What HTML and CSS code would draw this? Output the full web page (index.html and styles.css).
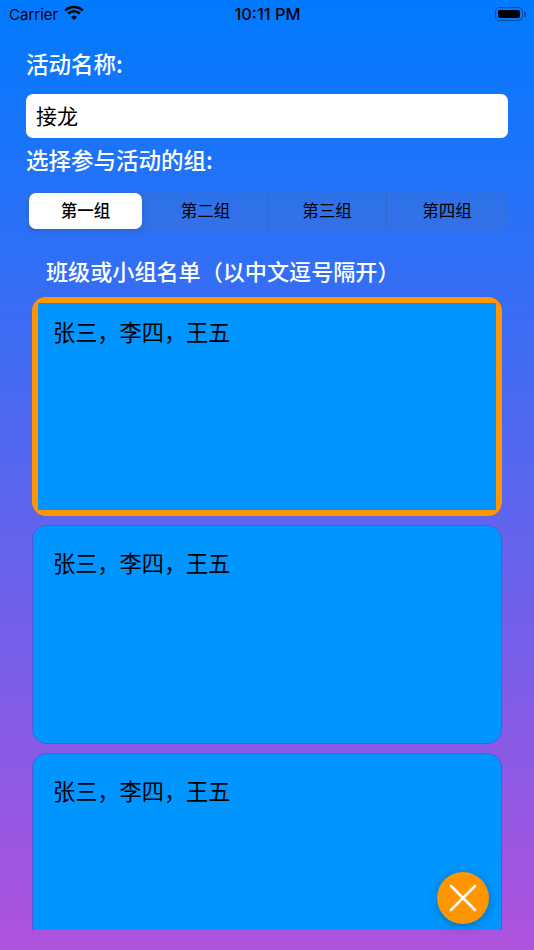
FILE: index.html
```html
<!DOCTYPE html>
<html lang="zh">
<head>
<meta charset="utf-8">
<title>活动</title>
<link rel="stylesheet" href="styles.css">
</head>
<body>
<div class="screen">
  <header class="status">
    <div class="status-left">
      <span>Carrier</span>
      <svg class="wifi" viewBox="0 0 20 15" width="20" height="15"><path d="M10 10.6l3 1.4-3 3-3-3z" fill="#000"/><path d="M1.2 5.6a12.6 12.6 0 0 1 17.6 0M4.2 8.5a8.4 8.4 0 0 1 11.6 0" fill="none" stroke="#000" stroke-width="2.5"/></svg>
    </div>
    <div class="status-time">10:11 PM</div>
    <div class="status-right">
      <div class="battery"><div class="battery-fill"></div></div>
      <div class="battery-cap"></div>
    </div>
  </header>
  <main class="form">
    <h2 class="label label-name">活动名称:</h2>
    <div class="input">接龙</div>
    <h2 class="label label-group">选择参与活动的组:</h2>
    <div class="segments">
      <div class="segment selected">第一组</div>
      <div class="segment second">第二组</div>
      <div class="segment divided">第三组</div>
      <div class="segment divided last">第四组</div>
    </div>
    <h2 class="label label-list">班级或小组名单（以中文逗号隔开）</h2>
    <div class="cards">
      <div class="card active"><div class="card-fill">张三，李四，王五</div></div>
      <div class="card">张三，李四，王五</div>
      <div class="card">张三，李四，王五</div>
    </div>
  </main>
  <button class="fab" aria-label="关闭">
    <svg viewBox="0 0 28 28" width="28" height="28"><path d="M2 2l24 24M26 2L2 26" stroke="#fff" stroke-width="2.6" stroke-linecap="round" fill="none"/></svg>
  </button>
</div>
</body>
</html>
```
FILE: styles.css
```css
* { box-sizing: border-box; margin: 0; padding: 0; }
html, body { width: 534px; height: 950px; overflow: hidden; }
body { font-family: "Noto Sans CJK SC", "Noto Sans", sans-serif; }
.screen {
  position: relative;
  width: 534px;
  height: 950px;
  overflow: hidden;
  background: linear-gradient(180deg, #007aff 0%, #af52de 100%);
}
.status {
  display: grid;
  grid-template-columns: 1fr auto 1fr;
  align-items: center;
  height: 28px;
  padding: 0 8px 0 9px;
  font-family: Inter, "Liberation Sans", sans-serif;
  font-size: 15px;
  color: #000;
}
.status-left { display: flex; align-items: center; gap: 6px; }
.wifi { margin-top: -3px; }
.status-time { font-size: 16.5px; font-weight: 500; }
.status-right { display: flex; align-items: center; justify-content: flex-end; }
.battery {
  width: 28px;
  height: 14px;
  padding: 2px;
  border: 1px solid rgba(0, 0, 0, 0.35);
  border-radius: 4px;
}
.battery-fill { width: 100%; height: 100%; background: #000; border-radius: 2px; }
.battery-cap { width: 2px; height: 5px; margin-left: 1px; background: rgba(0, 0, 0, 0.35); border-radius: 0 1px 1px 0; }
.form { display: flex; flex-direction: column; padding: 0 26px; }
.label { color: #fff; font-size: 22.5px; font-weight: 500; line-height: 30px; }
.label-name { margin-top: 20px; }
.input {
  margin-top: 16px;
  height: 44px;
  padding: 0 10px;
  background: #fff;
  border-radius: 7px;
  color: #000;
  font-size: 21px;
  line-height: 42px;
}
.label-group { margin-top: 6px; }
.segments {
  display: grid;
  grid-template-columns: repeat(4, 1fr);
  align-items: start;
  height: 41px;
  margin-top: 17px;
  padding: 2px 3px;
  background: rgba(118, 118, 128, 0.12);
  border-radius: 9px;
}
.segment {
  height: 36px;
  color: #000;
  font-size: 16.5px;
  line-height: 35px;
  text-align: center;
}
.segment.second { padding-right: 4px; }
.segment.last { padding-left: 2px; }
.segment.divided { border-left: 1px solid rgba(60, 60, 67, 0.14); }
.segment.selected {
  margin-right: 6px;
  background: #fff;
  border-radius: 7px;
  font-weight: 500;
  box-shadow: 0 2px 6px rgba(0, 0, 0, 0.14);
}
.label-list { margin-top: 23px; margin-left: 20px; font-size: 22.1px; }
.cards {
  display: flex;
  flex-direction: column;
  gap: 9px;
  height: 633px;
  margin: 12px 6px 0;
  overflow: hidden;
}
.card {
  flex: 0 0 219px;
  padding: 21px 20px;
  background: #0095ff;
  border: 1px solid #5856d6;
  border-radius: 14px;
  color: #000;
  font-size: 22.2px;
  line-height: 30px;
}
.card.active { padding: 6px; background: #ff9500; border: 0; }
.card-fill { height: 100%; padding: 13px 15px; background: #0095ff; }
.fab {
  position: absolute;
  left: 437px;
  top: 872px;
  display: flex;
  align-items: center;
  justify-content: center;
  width: 52px;
  height: 52px;
  background: #ff9500;
  border: 0;
  border-radius: 50%;
  box-shadow: 0 2px 10px rgba(0, 0, 0, 0.25);
}
```
